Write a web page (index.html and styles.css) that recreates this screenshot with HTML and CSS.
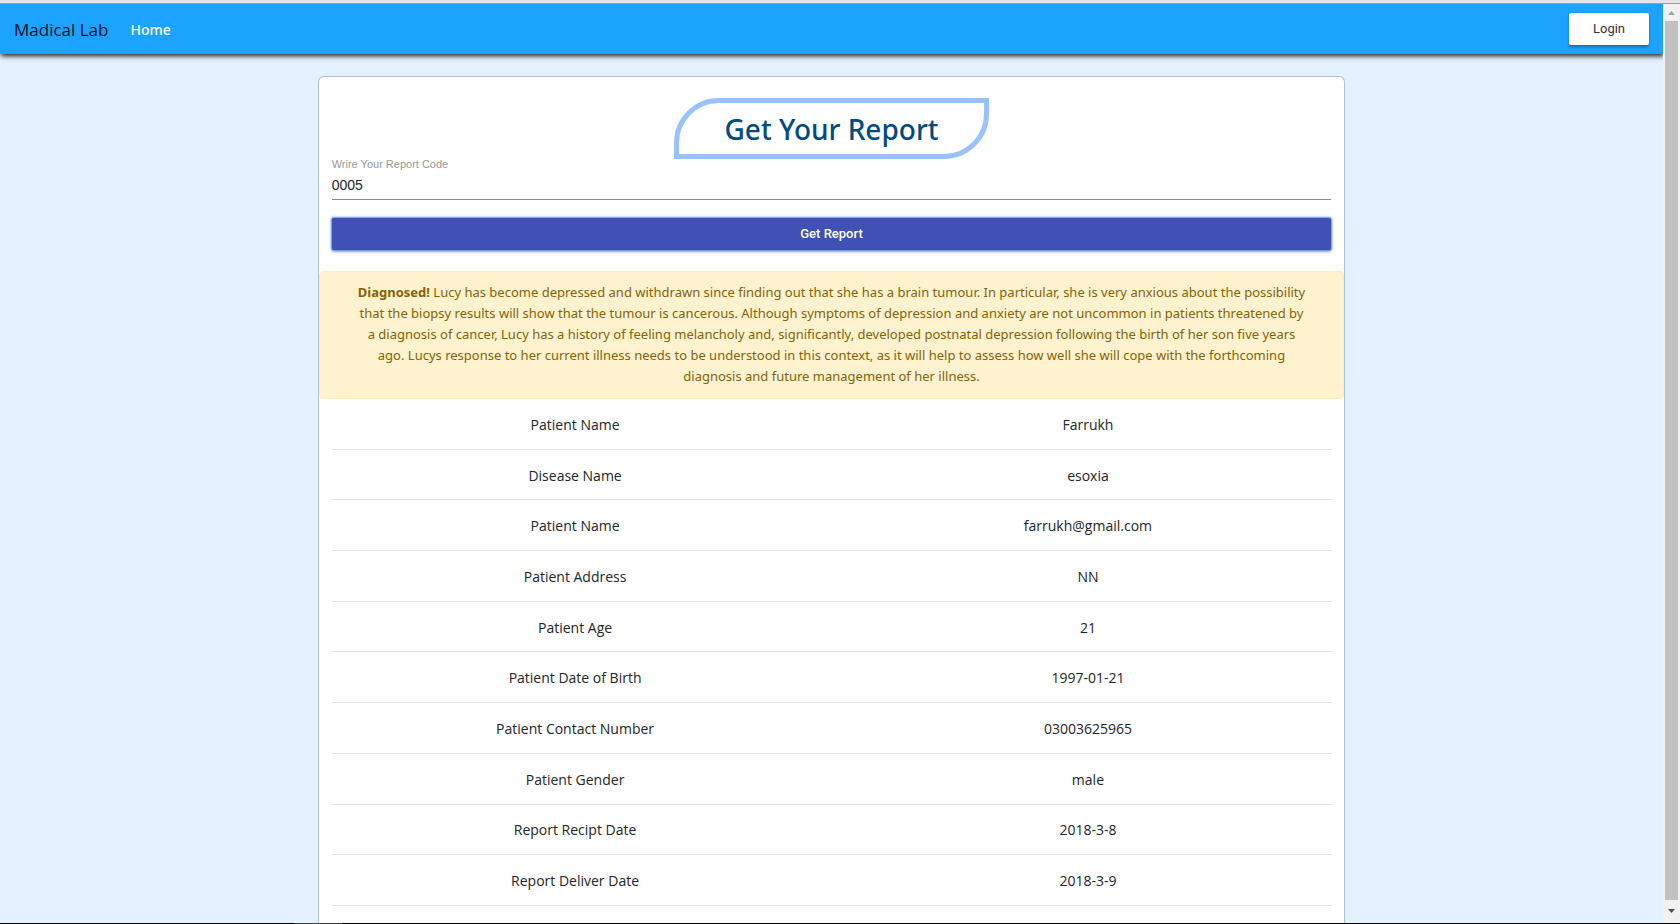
FILE: index.html
```html
<!DOCTYPE html>
<html lang="en">
<head>
<meta charset="utf-8">
<title>Madical Lab</title>
<link rel="stylesheet" href="styles.css">
</head>
<body>
<div class="window-edge"></div>
<div class="window">
  <div class="page">
    <header class="navbar">
      <a class="brand" href="#">Madical Lab</a>
      <nav class="nav"><a class="nav-link" href="#">Home</a></nav>
      <button class="login" type="button">Login</button>
    </header>
    <main class="card">
      <h1 class="title">Get Your Report</h1>
      <form class="form">
        <label class="field-label" for="code">Wrire Your Report Code</label>
        <input class="field-input" id="code" type="text" value="0005">
        <button class="submit" type="button">Get Report</button>
      </form>
      <p class="alert"><strong>Diagnosed!</strong> Lucy has become depressed and withdrawn since finding out that she has a brain tumour. In particular, she is very anxious about the possibility<br>
        that the biopsy results will show that the tumour is cancerous. Although symptoms of depression and anxiety are not uncommon in patients threatened by<br>
        a diagnosis of cancer, Lucy has a history of feeling melancholy and, significantly, developed postnatal depression following the birth of her son five years<br>
        ago. Lucys response to her current illness needs to be understood in this context, as it will help to assess how well she will cope with the forthcoming<br>
        diagnosis and future management of her illness.</p>
      <table class="report">
        <tbody>
          <tr><th scope="row">Patient Name</th><td>Farrukh</td></tr>
          <tr><th scope="row">Disease Name</th><td>esoxia</td></tr>
          <tr><th scope="row">Patient Name</th><td>farrukh@gmail.com</td></tr>
          <tr><th scope="row">Patient Address</th><td>NN</td></tr>
          <tr><th scope="row">Patient Age</th><td>21</td></tr>
          <tr><th scope="row">Patient Date of Birth</th><td>1997-01-21</td></tr>
          <tr><th scope="row">Patient Contact Number</th><td>03003625965</td></tr>
          <tr><th scope="row">Patient Gender</th><td>male</td></tr>
          <tr><th scope="row">Report Recipt Date</th><td>2018-3-8</td></tr>
          <tr><th scope="row">Report Deliver Date</th><td>2018-3-9</td></tr>
        </tbody>
      </table>
    </main>
  </div>
  <div class="scrollbar" aria-hidden="true">
    <svg class="arrow" viewBox="0 0 17 17"><path d="M5 11h7L8.500 7z" fill="#a3a3a3"/></svg>
    <div class="thumb"></div>
    <svg class="arrow arrow-down" viewBox="0 0 17 17"><path d="M5 6h7L8.500 10z" fill="#505050"/></svg>
  </div>
</div>
<div class="taskbar"><div class="taskbar-item"></div></div>
</body>
</html>
```

FILE: styles.css
```css
* { box-sizing: border-box; }

body {
  margin: 0;
  height: 100vh;
  display: flex;
  flex-direction: column;
  overflow: hidden;
  font: 14px/21px "Open Sans", "Noto Sans", sans-serif;
  color: #212529;
}

.window-edge {
  flex: none;
  height: 4px;
  background: #e4e4e4;
  border-bottom: 1px solid #a0a0a0;
}

.window {
  flex: 1;
  min-height: 0;
  display: flex;
}

.page {
  flex: 1;
  display: flex;
  flex-direction: column;
  overflow: hidden;
  background: #e4f1ff;
}

.navbar {
  flex: none;
  display: flex;
  align-items: center;
  padding: 9px 14px;
  background: #1ca3ff;
  box-shadow: 1px 2px 5px rgba(0, 0, 0, 0.9);
}

.brand {
  color: #04111f;
  font-size: 17px;
  line-height: 27px;
  text-decoration: none;
}

.nav { flex: 1; padding-left: 22px; }

.nav-link {
  color: #fff;
  font-family: "Noto Sans", sans-serif;
  font-weight: 500;
  text-decoration: none;
}

.login {
  width: 80px;
  height: 32px;
  padding: 0 6px 1px;
  border: 0;
  border-radius: 2px;
  background: #fff;
  color: #333;
  font: 13px Roboto, sans-serif;
  box-shadow: 0 2px 3px rgba(0, 0, 0, 0.35);
}

.card {
  flex: 1 0 auto;
  width: 61.8%;
  margin: 22px auto 0;
  padding-top: 21px;
  display: flex;
  flex-direction: column;
  background: #fff;
  border: 1px solid #adc0d6;
  border-bottom: 0;
  border-radius: 6px 6px 0 0;
}

.title {
  align-self: center;
  margin: 0;
  padding: 8px 46px 7px;
  border: 5px solid #9ac2ff;
  border-radius: 45px 0;
  color: #004b80;
  font: 500 28px/36px "Noto Sans", sans-serif;
}

.form {
  display: flex;
  flex-direction: column;
  padding: 0 13px;
  font-family: "Liberation Sans", Arial, sans-serif;
}

.field-label {
  color: #999;
  font-size: 11px;
  line-height: 11px;
}

.field-input {
  width: 100%;
  height: 30px;
  padding: 0;
  border: 0;
  border-bottom: 1px solid #8a8a8a;
  background: transparent;
  color: #212529;
  font: 14px "Liberation Sans", Arial, sans-serif;
  outline: 0;
}

.submit {
  height: 32px;
  margin-top: 18px;
  padding: 0 6px 2px;
  border: 0;
  border-radius: 2px;
  background: #3f51b5;
  color: #fff;
  font: 500 13px Roboto, sans-serif;
  box-shadow: 0 0 2px 1px #4d90fe, 0 2px 3px rgba(0, 0, 0, 0.3);
}

.alert {
  margin: 21px 0 0;
  padding: 10px 12px 11px;
  border: 1px solid #ffeeba;
  border-radius: 4px;
  background: #fff2cf;
  color: #856404;
  font: 13px/21px "Noto Sans", sans-serif;
  text-align: center;
}

.report {
  width: 100%;
  height: 507px;
  table-layout: fixed;
  border-collapse: collapse;
}

.report tr {
  background: linear-gradient(#e5e5e5, #e5e5e5) center bottom / calc(100% - 26px) 1px no-repeat;
}

.report th,
.report td {
  padding: 14px 13px;
  font-weight: 400;
  text-align: center;
}

.scrollbar {
  flex: none;
  width: 17px;
  display: flex;
  flex-direction: column;
  background: #f1f1f1;
}

.arrow { flex: none; width: 17px; height: 17px; }
.arrow-down { height: 23px; }

.thumb {
  flex: 1;
  margin: 0 2px;
  background: #c1c1c1;
}

.taskbar {
  flex: none;
  height: 1px;
  padding-left: 294px;
  background: #000;
}

.taskbar-item { width: 48px; height: 1px; background: #404040; }
```
